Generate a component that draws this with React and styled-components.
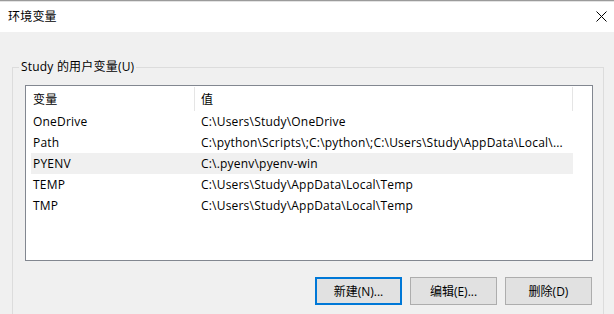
import React from "react";
import styled, { createGlobalStyle } from "styled-components";

const rows = [
  { name: "OneDrive", value: "C:\\Users\\Study\\OneDrive" },
  { name: "Path", value: "C:\\python\\Scripts\\;C:\\python\\;C:\\Users\\Study\\AppData\\Local\\..." },
  { name: "PYENV", value: "C:\\.pyenv\\pyenv-win", selected: true },
  { name: "TEMP", value: "C:\\Users\\Study\\AppData\\Local\\Temp" },
  { name: "TMP", value: "C:\\Users\\Study\\AppData\\Local\\Temp" },
];

function App() {
  return (
    <>
      <GlobalStyle />
      <Window>
        <TitleBar>
          <Title>环境变量</Title>
          <CloseButton>
            <svg width="11" height="11" viewBox="0 0 11 11">
              <path d="M0.5 0.5 L10.5 10.5 M10.5 0.5 L0.5 10.5" stroke="#000" strokeWidth="1" />
            </svg>
          </CloseButton>
        </TitleBar>
        <Body>
          <Group>
            <Legend>Study 的用户变量(U)</Legend>
            <ListView>
              <Header>
                <HeaderCell>变量</HeaderCell>
                <HeaderCell $second>值</HeaderCell>
              </Header>
              {rows.map((r) => (
                <Row key={r.name} $selected={r.selected}>
                  <Cell>{r.name}</Cell>
                  <Cell $second>{r.value}</Cell>
                </Row>
              ))}
            </ListView>
            <Buttons>
              <Button $focused>新建(N)...</Button>
              <Button>编辑(E)...</Button>
              <Button>删除(D)</Button>
            </Buttons>
          </Group>
        </Body>
      </Window>
    </>
  );
}

export default App;

const GlobalStyle = createGlobalStyle`
  html, body {
    margin: 0;
    padding: 0;
    background: #f0f0f0;
    overflow: hidden;
  }
  body {
    font-family: "Open Sans", "Noto Sans CJK SC", sans-serif;
    font-size: 12px;
    letter-spacing: 0.2px;
    color: #000;
  }
`;

const Window = styled.div`
  width: 614px;
  height: 314px;
  overflow: hidden;
  background: #f0f0f0;
  border-top: 1px solid #9b9b9b;
  box-sizing: border-box;
`;

const TitleBar = styled.div`
  height: 31px;
  background: #fff;
  border-top: 1px solid #e3e3e3;
  box-sizing: border-box;
  display: flex;
  align-items: center;
  justify-content: space-between;
  padding: 0 7px 2px 8px;
`;

const Title = styled.div`
  font-size: 12px;
`;

const CloseButton = styled.div`
  display: flex;
  align-items: center;
`;

const Body = styled.div`
  padding-top: 27px;
`;

const Group = styled.fieldset`
  margin: 0 10px 0 12px;
  padding: 0 0 40px 0;
  border: 1px solid #dcdcdc;
  min-width: 0;
`;

const Legend = styled.legend`
  margin-left: 6px;
  padding: 0 2px;
  line-height: 16px;
`;

const ListView = styled.div`
  margin: 10px 10px 0 12px;
  height: 176px;
  box-sizing: border-box;
  border: 1px solid #828790;
  background: #fff;
  padding-left: 5px;
`;

const Header = styled.div`
  display: grid;
  grid-template-columns: 164px 378px;
  height: 25px;
  align-items: center;
`;

const HeaderCell = styled.div`
  height: 24px;
  display: flex;
  align-items: center;
  padding-left: ${(p) => (p.$second ? "6px" : "2px")};
  border-right: 1px solid #e5e5e5;
  box-sizing: border-box;
`;

const Row = styled.div`
  display: grid;
  grid-template-columns: 168px 374px;
  height: 21px;
  align-items: center;
  background: ${(p) => (p.$selected ? "#f0f0f0" : "transparent")};
  width: 542px;
`;

const Cell = styled.div`
  padding-left: 2px;
  white-space: nowrap;
  overflow: hidden;
`;

const Buttons = styled.div`
  display: flex;
  justify-content: flex-end;
  gap: 8px;
  margin: 16px 11px 0 0;
`;

const Button = styled.div`
  width: 87px;
  height: 28px;
  box-sizing: border-box;
  background: #e1e1e1;
  border: ${(p) => (p.$focused ? "2px solid #0078d7" : "1px solid #adadad")};
  display: flex;
  align-items: center;
  justify-content: center;
  letter-spacing: 0;
`;
